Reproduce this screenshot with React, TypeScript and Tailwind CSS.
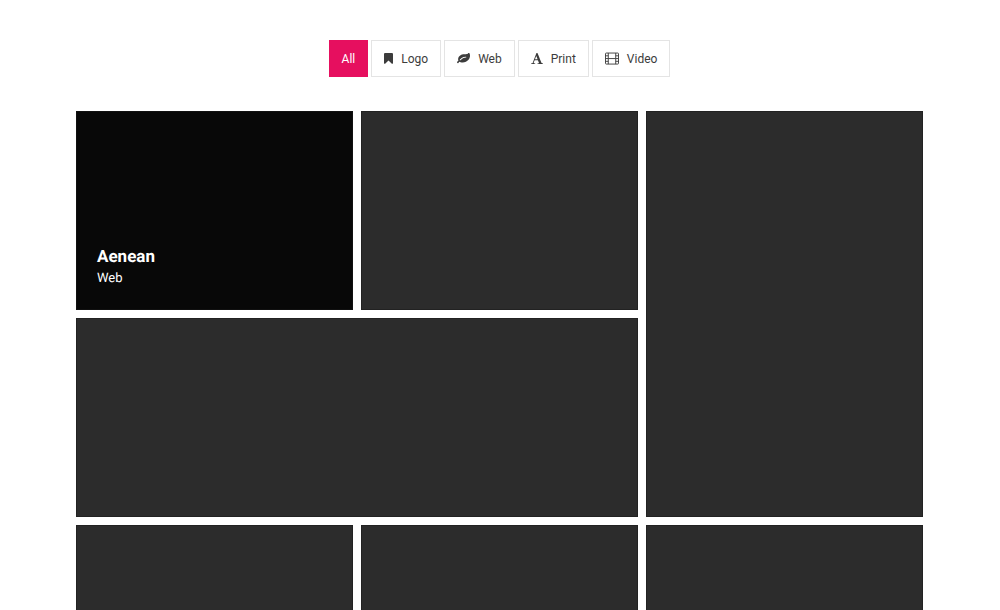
import { useState } from "react";
import type { ReactNode } from "react";

type Category = "All" | "Logo" | "Web" | "Print" | "Video";

const BookmarkIcon = () => (
  <svg viewBox="256 0 1280 1792" className="h-[13px] w-[9px]" fill="currentColor" aria-hidden="true">
    <path d="M1420 128q23 0 44 9 33 13 52.5 41t19.5 62v1289q0 34-19.5 62t-52.5 41q-19 8-44 8-48 0-83-32l-441-424-441 424q-36 33-83 33-23 0-44-9-33-13-52.5-41t-19.5-62v-1289q0-34 19.5-62t52.5-41q21-9 44-9h1048z" />
  </svg>
);

const LeafIcon = () => (
  <svg viewBox="0 0 1792 1792" className="size-[13px]" fill="currentColor" aria-hidden="true">
    <path d="M1280 704q0-26-19-45t-45-19q-172 0-318 49.5t-259.5 134-235.5 219.5q-19 21-19 45 0 26 19 45t45 19q24 0 45-19 27-24 74-71t67-66q137-124 268.5-176t313.5-52q26 0 45-19t19-45zm512-198q0 95-20 193-46 224-184.5 383t-357.5 268q-214 108-438 108-148 0-286-47-15-5-88-42t-96-37q-16 0-39.5 32t-45 70-52.5 70-60 32q-43 0-63.5-17.5t-45.5-59.5q-2-4-6-11t-5.5-10-3-9.5-1.5-13.5q0-35 31-73.5t68-65.5 68-56 31-48q0-4-14-38t-16-44q-9-51-9-104 0-115 43.5-220t119-184.5 170.5-139 204-95.5q55-18 145-25.5t179.5-9 178.5-6 163.5-24 113.5-56.5l29.5-29.5 29.5-28 27-20 36.5-16 43.5-4.5q39 0 70.5 46t47.5 112 24 124 8 96z" />
  </svg>
);

const FontIcon = () => (
  <svg viewBox="0 0 1664 1792" className="h-[13px] w-[12px]" fill="currentColor" aria-hidden="true">
    <path d="M725 559l-170 450q33 0 136.5 2t160.5 2q19 0 57-2-87-253-184-452zm-725 1105l2-79q23-7 56-12.5t57-10.5 49.5-14.5 44.5-29 31-50.5l237-616 280-724h128q8 14 11 21l205 480q33 78 106 257.5t114 274.5q15 34 58 144.5t72 168.5q20 45 35 57 19 15 88 29.5t84 20.5q6 38 6 57 0 5-.5 13.5t-.5 12.5q-63 0-190-8t-191-8q-76 0-215 7t-178 8q0-43 4-78l131-28q1 0 12.5-2.5t15.5-3.5 14.5-4.5 15-6.5 11-8 9-11 2.5-14q0-16-31-96.5t-72-177.5-42-100l-450-2q-26 58-76.5 195.5t-50.5 162.5q0 22 14 37.5t43.5 24.5 48.5 13.5 57 8.5 41 4q1 19 1 58 0 9-2 27-58 0-174.5-10t-174.5-10q-8 0-26.5 4t-21.5 4q-80 14-188 14z" />
  </svg>
);

const FilmIcon = () => (
  <svg viewBox="0 0 1920 1792" className="h-[13px] w-[14px]" fill="none" stroke="currentColor" strokeWidth="128" aria-hidden="true">
    <rect x="64" y="144" width="1792" height="1520" rx="96" />
    <path d="M448 144v1520M1472 144v1520M448 904h1024" />
    <path d="M64 524h384M64 904h384M64 1284h384M1472 524h384M1472 904h384M1472 1284h384" />
  </svg>
);

const filters: { name: Category; icon?: ReactNode }[] = [
  { name: "All" },
  { name: "Logo", icon: <BookmarkIcon /> },
  { name: "Web", icon: <LeafIcon /> },
  { name: "Print", icon: <FontIcon /> },
  { name: "Video", icon: <FilmIcon /> },
];

const tiles: { id: number; span: string; title?: string; category?: string }[] = [
  { id: 1, span: "", title: "Aenean", category: "Web" },
  { id: 2, span: "" },
  { id: 3, span: "row-span-2" },
  { id: 4, span: "col-span-2" },
  { id: 5, span: "" },
  { id: 6, span: "" },
  { id: 7, span: "" },
];

export default function App() {
  const [active, setActive] = useState<Category>("All");

  return (
    <main className="min-h-screen bg-white pt-10 pr-[77px] pl-[76px] font-[Roboto,sans-serif] [text-rendering:geometricPrecision]">
      <nav aria-label="Portfolio filter" className="flex flex-wrap justify-center gap-[3px]">
        {filters.map(({ name, icon }) => (
          <button
            key={name}
            type="button"
            aria-pressed={active === name}
            onClick={() => setActive(name)}
            className={`flex h-[37px] cursor-pointer items-center gap-2 border px-3 text-xs leading-5 ${
              active === name
                ? "border-[#e60f5f] bg-[#e60f5f] text-white"
                : "border-[#e4e4e4] bg-white text-[#3c3c3c]"
            }`}
          >
            {icon}
            {name}
          </button>
        ))}
      </nav>

      <section aria-label="Portfolio" className="mt-[34px] grid auto-rows-[199px] grid-cols-3 gap-2">
        {tiles.map(({ id, span, title, category }) => (
          <article
            key={id}
            className={`flex flex-col justify-end border px-5 pb-5 text-white ${span} ${
              title ? "border-[#111111] bg-[#080808]" : "border-[#222222] bg-[#2c2c2c]"
            }`}
          >
            {title && <h2 className="text-[17px] leading-5 font-bold">{title}</h2>}
            {category && <p className="mt-0.5 text-[13px] leading-5">{category}</p>}
          </article>
        ))}
      </section>
    </main>
  );
}
